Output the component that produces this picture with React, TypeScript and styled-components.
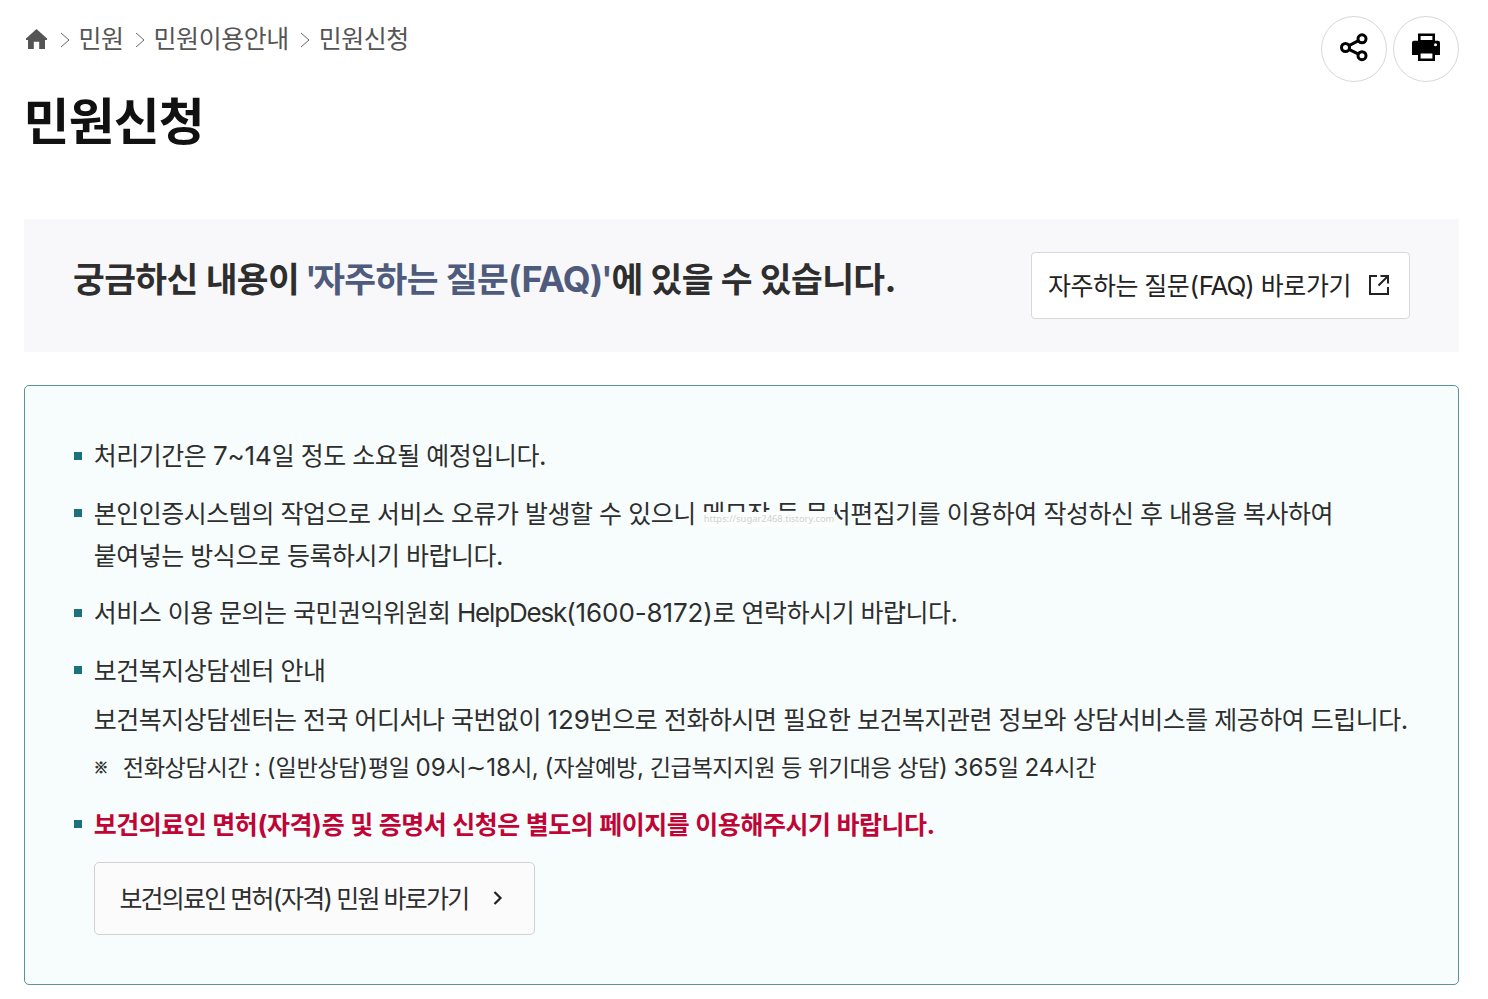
import React from 'react';
import styled, { createGlobalStyle } from 'styled-components';

const Global = createGlobalStyle`
  * { box-sizing: border-box; }
  body { margin: 0; background: #fff; color: #2e2e2e; font-family: Inter, "Noto Sans CJK KR", sans-serif; }
  ul, p, h1, h2 { margin: 0; padding: 0; }
`;

const Hangul = styled.span<{ $track: number }>`
  font-family: "Noto Sans CJK KR", sans-serif;
  font-size: 0.96em;
  letter-spacing: ${(p) => -0.0178 + p.$track}em;
`;
const Latin = styled.span<{ $track: number }>`
  letter-spacing: ${(p) => p.$track}em;
`;
const Figures = styled.span<{ $track: number }>`
  letter-spacing: ${(p) => -0.004 + p.$track}em;
`;
const Quote = styled.span<{ $close?: boolean }>`
  margin-left: -0.06em;
  margin-right: ${(p) => (p.$close ? -0.035 : -0.1)}em;
  font-weight: 600;
`;
const Blank = styled.span<{ $width: number }>`
  display: inline-block;
  width: ${(p) => p.$width}em;
`;

interface MixedProps {
  children: string;
  track?: number;
  latin?: number;
  blank?: number;
}

function Mixed({ children, track = 0, latin = -0.045, blank = 0.25 }: MixedProps) {
  const parts = children.match(/[가-힣]+| |[A-Za-z]+|[^가-힣 A-Za-z]+/g) ?? [];
  return (
    <>
      {parts.map((part, i) => {
        if (part === ' ') return <Blank key={i} $width={blank + track}>{' '}</Blank>;
        if (/[가-힣]/.test(part)) return <Hangul key={i} $track={track}>{part}</Hangul>;
        if (/[A-Za-z]/.test(part)) return <Latin key={i} $track={latin + track}>{part}</Latin>;
        return <Figures key={i} $track={track}>{part}</Figures>;
      })}
    </>
  );
}

const Page = styled.main`
  width: 1488px;
  height: 999px;
  padding: 16px 29px 0 24px;
  overflow: hidden;
  white-space: nowrap;
`;
const TopBar = styled.header`
  display: flex;
  justify-content: space-between;
  height: 66px;
`;
const Crumbs = styled.nav`
  display: flex;
  align-items: center;
  height: 44px;
  font-size: 26px;
  line-height: 44px;
  color: #555;
`;
const HomeIcon = styled.svg`
  width: 25px;
  height: 24px;
  margin-top: 2px;
  margin-right: -0.4px;
`;
const CrumbArrow = styled.svg`
  width: 10px;
  height: 16px;
  margin: 4px 8.6px 0 11.4px;
`;
const Tools = styled.div`
  display: flex;
  gap: 6px;
`;
const RoundButton = styled.button`
  display: grid;
  place-items: center;
  width: 66px;
  height: 66px;
  padding: 0 0 4px;
  border: 1px solid #d8d8d8;
  border-radius: 50%;
  background: #fff;
  svg { width: 30px; height: 30px; }
`;
const Title = styled.h1`
  height: 78px;
  margin: -3px 0 0 -0.4px;
  font-size: 52px;
  line-height: 78px;
  font-weight: 700;
  color: #111;
`;
const FaqBand = styled.section`
  display: flex;
  justify-content: space-between;
  height: 133px;
  margin-top: 62px;
  padding: 33px 49px;
  background: #f8f8fa;
`;
const FaqText = styled.h2`
  font-size: 36px;
  line-height: 50px;
  font-weight: 700;
  color: #2e2e2e;
`;
const Accent = styled.span`
  color: #4f5b7c;
`;
const FaqLink = styled.a`
  display: flex;
  align-items: center;
  justify-content: space-between;
  width: 379px;
  height: 67px;
  padding: 0 19px 0 16px;
  border: 1px solid #d8d8d8;
  border-radius: 4px;
  background: #fff;
  font-size: 26px;
  color: #222;
  span { line-height: 38px; }
  > span { padding-bottom: 2px; }
  svg { width: 22px; height: 22px; margin-bottom: 2px; }
`;
const Notice = styled.section`
  height: 600px;
  margin-top: 33px;
  padding: 48.4px 49px;
  border: 1px solid #5a9296;
  border-radius: 5px;
  background: #f7fdfd;
`;
const List = styled.ul`
  display: flex;
  flex-direction: column;
  gap: 16px;
  list-style: none;
`;
const Item = styled.li`
  display: grid;
  grid-template-columns: 19.8px 1fr;
  font-size: 26px;
  line-height: 41.6px;
`;
const Bullet = styled.i`
  width: 8px;
  height: 8px;
  margin-top: 17.4px;
  background: #1b727c;
`;
const Line = styled.p<{ $gap?: number }>`
  position: relative;
  height: 41.6px;
  margin-top: ${(p) => p.$gap ?? 0}px;
`;
const WrappedLine = styled(Line)`
  line-height: 40.4px;
`;
const Note = styled.p`
  display: flex;
  height: 39px;
  margin-top: 8px;
  font-size: 24.15px;
  line-height: 36.4px;
`;
const NoteMark = styled.span`
  width: 29px;
  font-family: "Noto Sans CJK KR", sans-serif;
  font-size: 14.5px;
  font-weight: 700;
  line-height: 38px;
  -webkit-text-stroke: 0.6px #2e2e2e;
`;
const Warning = styled(Line)`
  font-weight: 700;
  color: #c00536;
`;
const Watermark = styled.span`
  position: absolute;
  left: 609px;
  top: 20px;
  width: 132px;
  height: 15px;
  padding-left: 1px;
  background: #fcfefe;
  font: 9.4px/14px "Noto Sans", sans-serif;
  color: #d0d0d0;
`;
const LicenseLink = styled.a`
  display: flex;
  align-items: center;
  width: 441px;
  height: 73px;
  margin: 17px 0 0 0.2px;
  padding: 0 24.4px;
  border: 1px solid #cfd1d6;
  border-radius: 5px;
  background: #fbfbfc;
  svg { width: 10px; height: 14px; margin-left: 24.5px; }
`;

function Separator() {
  return (
    <CrumbArrow viewBox="0 0 10 16" fill="none" stroke="#666" strokeWidth="1">
      <path d="M1 1l8 7-8 7" />
    </CrumbArrow>
  );
}

export default function App() {
  return (
    <Page>
      <Global />
      <TopBar>
        <Crumbs>
          <HomeIcon viewBox="0 0 25 24" fill="#555">
            <path d="M12.5 2L23 11.4V13h-2v9h-5.8v-7.2H9.8V22H4v-9H2v-1.6z" />
          </HomeIcon>
          <Separator />
          <span><Mixed>민원</Mixed></span>
          <Separator />
          <span><Mixed>민원이용안내</Mixed></span>
          <Separator />
          <span><Mixed>민원신청</Mixed></span>
        </Crumbs>
        <Tools>
          <RoundButton aria-label="공유">
            <svg viewBox="0 0 30 30" fill="none" stroke="#000" strokeWidth="3">
              <circle cx="6.5" cy="15.5" r="4" />
              <circle cx="23" cy="6.8" r="4" />
              <circle cx="23" cy="23.7" r="4" />
              <path d="M10 13.7l9.5-5M10 17.3l9.5 4.8" />
            </svg>
          </RoundButton>
          <RoundButton aria-label="인쇄">
            <svg viewBox="0 0 30 30" fill="none">
              <path d="M3 8.8h24a2 2 0 0 1 2 2V23H1V10.8a2 2 0 0 1 2-2z" fill="#000" />
              <path d="M8.3 2.7h14.4v6.6H8.3zM8.3 20.3h14.4v7.5H8.3z" fill="#fff" stroke="#000" strokeWidth="2.6" />
              <circle cx="24.5" cy="12.8" r="1.5" fill="#fff" />
            </svg>
          </RoundButton>
        </Tools>
      </TopBar>
      <Title><Mixed>민원신청</Mixed></Title>
      <FaqBand>
        <FaqText>
          <Mixed blank={0.222}>궁금하신 내용이 </Mixed>
          <Accent>
            <Quote>'</Quote>
            <Mixed blank={0.22} latin={-0.028}>자주하는 질문(FAQ)</Mixed>
            <Quote $close>'</Quote>
          </Accent>
          <Mixed blank={0.22}>에 있을 수 있습니다.</Mixed>
        </FaqText>
        <FaqLink>
          <span><Mixed blank={0.242}>자주하는 질문(FAQ) 바로가기</Mixed></span>
          <svg viewBox="0 0 22 22" fill="none" stroke="#222" strokeWidth="2">
            <path d="M9 2H2v18h18v-7M12.5 2H20v7.5M20 2l-9.5 9.5" />
          </svg>
        </FaqLink>
      </FaqBand>
      <Notice>
        <List>
          <Item>
            <Bullet />
            <Line><Mixed>처리기간은 7~14일 정도 소요될 예정입니다.</Mixed></Line>
          </Item>
          <Item>
            <Bullet />
            <div>
              <Line>
                <Mixed>본인인증시스템의 작업으로 서비스 오류가 발생할 수 있으니 메모장 등 문서편집기를 이용하여 작성하신 후 내용을 복사하여</Mixed>
                <Watermark>https://sugar2468.tistory.com</Watermark>
              </Line>
              <WrappedLine><Mixed>붙여넣는 방식으로 등록하시기 바랍니다.</Mixed></WrappedLine>
            </div>
          </Item>
          <Item>
            <Bullet />
            <Line><Mixed blank={0.245}>서비스 이용 문의는 국민권익위원회 HelpDesk(1600-8172)로 연락하시기 바랍니다.</Mixed></Line>
          </Item>
          <Item>
            <Bullet />
            <div>
              <Line><Mixed>보건복지상담센터 안내</Mixed></Line>
              <Line $gap={8}><Mixed>보건복지상담센터는 전국 어디서나 국번없이 129번으로 전화하시면 필요한 보건복지관련 정보와 상담서비스를 제공하여 드립니다.</Mixed></Line>
              <Note>
                <NoteMark>※</NoteMark>
                <span><Mixed blank={0.243}>전화상담시간 : (일반상담)평일 09시∼18시, (자살예방, 긴급복지지원 등 위기대응 상담) 365일 24시간</Mixed></span>
              </Note>
            </div>
          </Item>
          <Item>
            <Bullet />
            <div>
              <Warning><Mixed blank={0.23}>보건의료인 면허(자격)증 및 증명서 신청은 별도의 페이지를 이용해주시기 바랍니다.</Mixed></Warning>
              <LicenseLink>
                <span><Mixed track={-0.051} blank={0.235}>보건의료인 면허(자격) 민원 바로가기</Mixed></span>
                <svg viewBox="0 0 10 14" fill="none" stroke="#222" strokeWidth="2.2">
                  <path d="M1.5 1l6 6-6 6" />
                </svg>
              </LicenseLink>
            </div>
          </Item>
        </List>
      </Notice>
    </Page>
  );
}
